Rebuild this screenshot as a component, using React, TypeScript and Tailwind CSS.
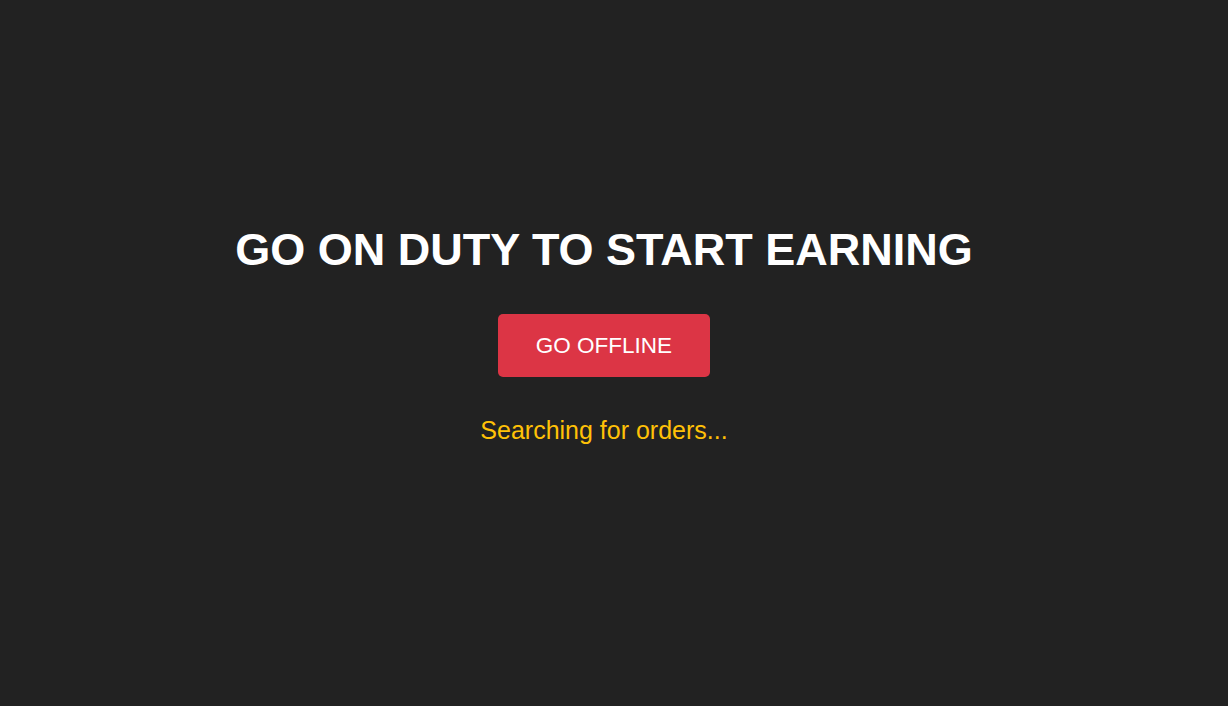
export default function App() {
  return (
    <div className="h-screen w-full bg-[#222222] flex flex-col items-center pt-[224px] pr-[20px] font-['Liberation_Sans',Arial,sans-serif]">
      <h1 className="text-[45px] leading-[52px] font-bold text-white">GO ON DUTY TO START EARNING</h1>
      <button className="mt-[38px] h-[63px] w-[212px] rounded-[5px] bg-[#dc3545] text-[22.5px] text-white">
        GO OFFLINE
      </button>
      <p className="mt-[38px] text-[25px] leading-[30px] text-[#ffc107]">Searching for orders...</p>
    </div>
  );
}
